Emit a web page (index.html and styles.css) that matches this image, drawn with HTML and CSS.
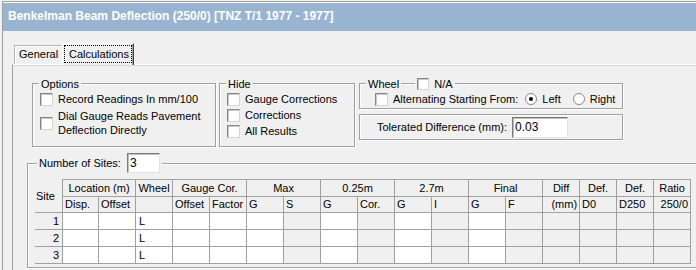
FILE: index.html
```html
<!DOCTYPE html>
<html lang="en">
<head>
    <meta charset="UTF-8">
    <title>Benkelman Beam Deflection</title>
    <link rel="stylesheet" href="styles.css">
</head>
<body>
<div class="window">
    <div class="titlebar">Benkelman Beam Deflection (250/0) [TNZ T/1 1977 - 1977]</div>
    <div class="content">
        <div class="tabs">
            <div class="tab">General</div>
            <div class="tab active"><span class="focus">Calculations</span></div>
        </div>
        <div class="panel">
            <div class="top-row">
                <div class="group options">
                    <div class="legend"><span class="lg">Options</span></div>
                    <div class="check"><span class="box"></span><span>Record Readings In mm/100</span></div>
                    <div class="check tall"><span class="box"></span><span>Dial Gauge Reads Pavement<br>Deflection Directly</span></div>
                </div>
                <div class="group hide">
                    <div class="legend"><span class="lg">Hide</span></div>
                    <div class="check"><span class="box"></span><span>Gauge Corrections</span></div>
                    <div class="check"><span class="box"></span><span>Corrections</span></div>
                    <div class="check"><span class="box"></span><span>All Results</span></div>
                </div>
                <div class="right-col">
                    <div class="group wheel">
                        <div class="legend">
                            <span class="lg">Wheel</span>
                            <span class="lg na"><span class="box small"></span><span>N/A</span></span>
                        </div>
                        <div class="check wheel-row">
                            <span class="box"></span><span>Alternating Starting From:</span>
                            <span class="radio on first"></span><span>Left</span>
                            <span class="radio second"></span><span>Right</span>
                        </div>
                    </div>
                    <div class="group tolerance">
                        <span>Tolerated Difference (mm):</span>
                        <input class="field tol-field" type="text" value="0.03">
                    </div>
                </div>
            </div>

            <div class="group sites">
                <div class="legend sites-legend">
                    <span>Number of Sites:</span>
                    <input class="field sites-field" type="text" value="3">
                </div>
                <table class="grid">
                    <colgroup>
                        <col class="c-site"><col class="c-first">
                        <col><col><col><col><col><col><col><col><col><col><col><col><col><col><col><col>
                    </colgroup>
                    <thead>
                        <tr class="head1">
                            <th class="site-head" rowspan="2">Site</th>
                            <th colspan="2">Location (m)</th>
                            <th>Wheel</th>
                            <th colspan="2">Gauge Cor.</th>
                            <th colspan="2">Max</th>
                            <th colspan="2">0.25m</th>
                            <th colspan="2">2.7m</th>
                            <th colspan="2">Final</th>
                            <th>Diff</th>
                            <th>Def.</th>
                            <th>Def.</th>
                            <th>Ratio</th>
                        </tr>
                        <tr class="head2">
                            <th>Disp.</th><th>Offset</th><th></th>
                            <th>Offset</th><th>Factor</th>
                            <th>G</th><th>S</th>
                            <th>G</th><th>Cor.</th>
                            <th>G</th><th>I</th>
                            <th>G</th><th>F</th>
                            <th class="r">(mm)</th><th>D0</th><th>D250</th><th class="r">250/0</th>
                        </tr>
                    </thead>
                    <tbody>
                        <tr>
                            <td class="num">1</td><td class="w"></td><td class="w"></td><td class="w">L</td>
                            <td class="w"></td><td class="w"></td><td class="w"></td><td></td>
                            <td class="w"></td><td></td><td class="w"></td><td></td>
                            <td class="w"></td><td></td><td></td><td></td><td></td><td></td>
                        </tr>
                        <tr>
                            <td class="num">2</td><td class="w"></td><td class="w"></td><td class="w">L</td>
                            <td class="w"></td><td class="w"></td><td class="w"></td><td></td>
                            <td class="w"></td><td></td><td class="w"></td><td></td>
                            <td class="w"></td><td></td><td></td><td></td><td></td><td></td>
                        </tr>
                        <tr>
                            <td class="num">3</td><td class="w"></td><td class="w"></td><td class="w">L</td>
                            <td class="w"></td><td class="w"></td><td class="w"></td><td></td>
                            <td class="w"></td><td></td><td class="w"></td><td></td>
                            <td class="w"></td><td></td><td></td><td></td><td></td><td></td>
                        </tr>
                    </tbody>
                </table>
            </div>
        </div>
    </div>
</div>
</body>
</html>
```

FILE: styles.css
```css
* {
    box-sizing: border-box;
}
body {
    margin: 0;
    width: 696px;
    height: 270px;
    overflow: hidden;
    background-color: #f0f0f0;
    font-family: "Liberation Sans", Arial, sans-serif;
    font-size: 11px;
    color: #000;
}
.window {
    margin: 1px 0 0 2px;
    height: 269px;
    overflow: hidden;
    border-top: 1px solid #a0a0a0;
    border-left: 1px solid #a0a0a0;
}
.titlebar {
    height: 29px;
    padding-left: 5px;
    border-top: 1px solid #fff;
    background-color: #99b4d1;
    color: #fff;
    font-size: 12px;
    font-weight: bold;
    line-height: 27px;
    white-space: nowrap;
}
.content {
    padding: 12px 0 0 9px;
}

/* tabs */
.tabs {
    display: flex;
    align-items: flex-end;
    height: 21px;
    padding-left: 2px;
}
.tab {
    width: 48px;
    height: 19px;
    padding-left: 4px;
    border: 1px solid #b5b5b5;
    border-bottom: none;
    border-right: none;
    box-shadow: inset 1px 1px 0 #fff;
    line-height: 17px;
}
.tab.active {
    position: relative;
    z-index: 1;
    width: 72px;
    height: 22px;
    margin-bottom: -1px;
    padding: 1px 1px 0 1px;
    border: 1px solid #fff;
    border-bottom: none;
    border-right-color: #404040;
    box-shadow: inset -1px 0 0 #a0a0a0;
    background-color: #f0f0f0;
}
.focus {
    display: block;
    height: 18px;
    padding-left: 4px;
    border: 1px dotted #000;
    line-height: 16px;
}
.panel {
    width: 684px;
    height: 206px;
    padding: 18px 0 0 14px;
    border-top: 1px solid #fff;
    border-left: 1px solid #a0a0a0;
    box-shadow: inset 0 1px 0 #d8d8d8;
}

/* group boxes */
.top-row {
    display: flex;
    margin-left: 5px;
}
.group {
    border: 1px solid #a0a0a0;
    box-shadow: 1px 1px 0 #fff, inset 1px 1px 0 #fff;
}
.legend {
    display: flex;
    align-items: center;
    width: max-content;
    height: 13px;
    margin: -7px 0 1px 6px;
}
.lg {
    display: flex;
    align-items: center;
    gap: 5px;
    height: 13px;
    padding: 0 2px;
    background-color: #f0f0f0;
}
.lg.na {
    margin-left: 14px;
}
.options {
    width: 184px;
    height: 64px;
}
.hide {
    width: 136px;
    height: 64px;
    margin-left: 3px;
}
.right-col {
    width: 264px;
    margin-left: 4px;
}
.wheel {
    height: 26px;
}
.tolerance {
    display: flex;
    align-items: center;
    height: 26px;
    margin-top: 5px;
    padding-left: 17px;
}

/* checkboxes and radios */
.check {
    display: flex;
    align-items: center;
    gap: 5px;
    height: 16px;
    padding-left: 7px;
}
.check.tall {
    height: 28px;
    margin-top: 2px;
    line-height: 14px;
}
.wheel-row {
    padding-left: 15px;
}
.box {
    flex-shrink: 0;
    width: 13px;
    height: 13px;
    border: 1px solid;
    border-color: #858585 #d4d4d4 #d4d4d4 #858585;
    box-shadow: inset 1px 1px 0 #c9c9c9;
    background-color: #fff;
}
.box.small {
    width: 12px;
    height: 12px;
}
.radio {
    display: flex;
    align-items: center;
    justify-content: center;
    flex-shrink: 0;
    width: 12px;
    height: 12px;
    border: 1px solid #8a8a8a;
    border-radius: 50%;
    background-color: #fff;
}
.radio.on::after {
    content: "";
    width: 4px;
    height: 4px;
    border-radius: 50%;
    background-color: #000;
}
.radio.first {
    margin-left: 2px;
}
.radio.second {
    margin-left: 7px;
}

/* text fields */
.field {
    margin: 0;
    padding: 0 2px;
    border: 1px solid;
    border-color: #7a7a7a #e3e3e3 #e3e3e3 #7a7a7a;
    box-shadow: inset 1px 1px 0 #bdbdbd;
    background-color: #fff;
    font-family: inherit;
    font-size: 12px;
    color: #000;
    outline: none;
}
.tol-field {
    width: 56px;
    height: 21px;
    margin-left: 5px;
}
.sites-field {
    width: 33px;
    height: 20px;
    margin-left: 6px;
}

/* sites grid */
.sites {
    width: 670px;
    height: 105px;
    margin-top: 16px;
    border-right: none;
}
.sites-legend {
    height: 20px;
    margin: -11px 0 0 9px;
    padding: 0 2px;
    background-color: #f0f0f0;
}
.grid {
    width: 656px;
    margin: 6px 0 0 7px;
    border-collapse: separate;
    border-spacing: 0;
    table-layout: fixed;
}
.grid col {
    width: 37px;
}
.grid col.c-site {
    width: 28px;
}
.grid col.c-first {
    width: 36px;
}
.grid th, .grid td {
    padding: 0 2px;
    border-right: 1px solid #a0a0a0;
    border-bottom: 1px solid #a0a0a0;
    font-weight: normal;
    white-space: nowrap;
    overflow: hidden;
}
.head1 th {
    border-top: 1px solid #a0a0a0;
    line-height: 16px;
    text-align: center;
}
.head1 th.site-head {
    padding-left: 1px;
    border-top: none;
    text-align: left;
    vertical-align: middle;
}
.head2 th {
    line-height: 15px;
    text-align: left;
}
.head2 th.r {
    text-align: right;
}
.grid td {
    padding: 0 3px;
    line-height: 16px;
}
.grid td.num {
    text-align: right;
}
.grid td.w {
    background-color: #fff;
}
```
